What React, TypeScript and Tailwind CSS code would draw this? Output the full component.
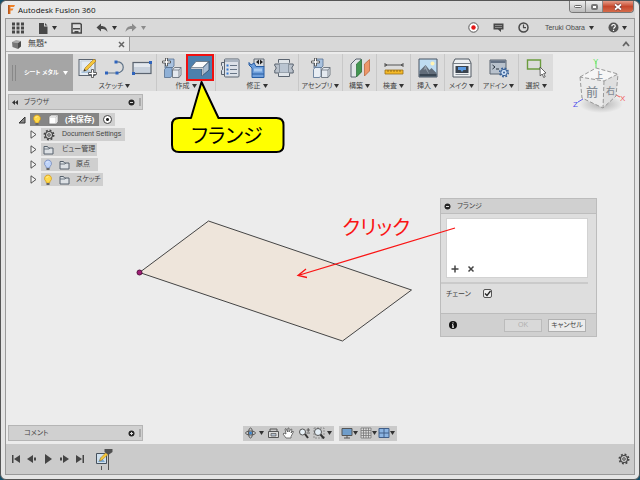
import type { ReactNode } from "react";

type IconProps = {
  children: ReactNode;
  box?: string;
  className?: string;
};

function Icon({ children, box = "0 0 20 20", className = "h-5 w-5" }: IconProps) {
  return (
    <svg viewBox={box} className={`shrink-0 ${className}`} fill="none" aria-hidden="true">
      {children}
    </svg>
  );
}

function Caret({ className = "text-[#333]" }: { className?: string }) {
  return (
    <Icon box="0 0 5 4" className={`h-1 w-[5px] ${className}`}>
      <path d="M0 0h5L2.5 4z" fill="currentColor" />
    </Icon>
  );
}

const line = "#5b6470";

const SketchIcon = () => (
  <Icon>
    <rect x="1" y="1.5" width="16" height="16" fill="#e4ebf2" stroke={line} />
    <path d="M3 15 8 9l6 6z" fill="#a9c4de" />
    <path d="M3 3h10v10H3z" stroke="#c4cfd9" />
    <path d="m6 13 1-3 9-9 2 2-9 9z" fill="#f5c63c" stroke="#a57315" strokeWidth=".6" />
    <path d="m5.500 13.500 1-2.500 1.500 1.500z" fill="#333" />
    <path d="M13.500 11.500h2v3h3v2h-3v3h-2v-3h-3v-2h3z" fill="#fff" stroke="#444" strokeWidth=".8" />
  </Icon>
);

const LineIcon = () => (
  <Icon>
    <path d="M1 15h11M11 4c10-1 9 11 1 11" stroke="#5f7388" strokeWidth="1.200" />
    <path d="M0 13.500h3v3H0zM9.500 2.500h3v3h-3zM10.500 13.500h3v3h-3z" fill="#2f64bd" />
  </Icon>
);

const RectIcon = () => (
  <Icon>
    <rect x="1" y="4.500" width="18" height="11" fill="#c8d1dc" stroke={line} strokeWidth="1.200" />
    <path d="M2 5.500h16V9H2z" fill="#e3e8ee" />
    <path d="M17 3h3v3h-3zM0 14h3v3H0z" fill="#2f64bd" />
  </Icon>
);

function BlockIcon({ assembly = false }: { assembly?: boolean }) {
  return (
    <Icon>
      <path d="M3 3.500 5 1h7v7l-2 2H3z" fill="#a9c2df" stroke="#55708f" strokeWidth=".8" />
      <path d="M2.500 11.500 4 9.500h6v8l-1.500 2h-6z" fill={assembly ? "#e8edf3" : "#8fb0d6"} stroke="#55708f" strokeWidth=".8" />
      <path d="M10.500 12 12.500 9.500H19v7.500l-2 2.500h-6.500z" fill="#e4e9ef" stroke={line} strokeWidth=".8" />
      <path d="M10.500 12H17v7.500M17 12l2-2.500" stroke={line} strokeWidth=".7" />
      <path d="M3.500 0h2v3h3v2h-3v3h-2V5h-3V3h3z" fill="#fff" stroke="#444" strokeWidth=".8" />
    </Icon>
  );
}

const FlangeIcon = () => (
  <Icon>
    <path d="M1 9.500 6 3.500h13l-6 6z" fill="#fbfbfb" stroke="#59636e" strokeWidth=".7" />
    <path d="m13 9.500 6-6v8.500L12 18v-7z" fill="#a9bdd4" stroke="#2d4a66" strokeWidth=".8" />
    <path d="M1 9.500V11h11v7l1-1V9.500z" fill="#e6ebf0" stroke="#59636e" strokeWidth=".4" />
  </Icon>
);

const TableIcon = () => (
  <Icon>
    <path d="M4 4.500H1.500v3l1 1v3l-1 1v4H4" fill="#d9dfe6" stroke={line} />
    <rect x="4.500" y="1" width="14.500" height="18" rx="1" fill="#dce1e8" stroke={line} />
    <path d="M5 1.500h13.500V4H5z" fill="#aab4c0" />
    <path d="M10 7.500h7M10 11.500h7M10 15.500h7" stroke="#667485" />
    <path d="M6.500 6.500h2v2h-2zM6.500 10.500h2v2h-2zM6.500 14.500h2v2h-2z" fill="#3478d0" />
  </Icon>
);

const UnfoldIcon = () => (
  <Icon>
    <path d="M7 1h10v8H7z" fill="#d9dce0" stroke="#636b74" />
    <path d="m9 4 3-2.500v5zm7 0-3-2.500v5z" fill="#222" />
    <path d="M2 4.500 4 7l3-2 2 3.500h8v11H5V10L2 7z" fill="#6f9fdb" stroke="#285da2" />
    <path d="M7 10.500h8v3H7z" fill="#a7c9ef" />
    <path d="M5 16h12" stroke="#285da2" />
  </Icon>
);

const PatternIcon = () => (
  <Icon>
    <path d="M5 6H.8v2L2 9v2L.8 12v3H5M15 6h4.200v2L18 9v2l1.200 1v3H15" fill="#b8c0ca" stroke={line} />
    <path d="M4.500 1.500h11v3l-1 1v9l1 1v3h-11v-3l1-1v-9l-1-1z" fill="#dfe4e9" stroke={line} />
    <path d="M5.500 5.500h9v9h-9z" fill="#bac5d2" />
    <path d="M5.500 5.500h9M5.500 14.500h9" stroke="#8b96a2" strokeWidth=".8" />
  </Icon>
);

const PlaneIcon = () => (
  <Icon>
    <path d="m1 6 5-5h5v13l-5 5H1z" fill="#e1e5e8" stroke={line} />
    <path d="m6.500 6 5-4.500V14l-5 5z" fill="#429650" stroke="#286f37" strokeWidth=".7" />
    <path d="m14.500 6 5-4.500V13l-5 5z" fill="#ed9769" stroke="#b45e31" strokeWidth=".7" />
  </Icon>
);

const MeasureIcon = () => (
  <Icon>
    <path d="M1 7h18M1 5v4M19 5v4" stroke="#444" strokeWidth=".9" />
    <path d="m1 7 2-1v2zm18 0-2-1v2z" fill="#444" />
    <path d="M1 12h18v4H1z" fill="#f4b928" stroke="#9b7016" strokeWidth=".8" />
    <path d="M4 12v2m3-2v2m3-2v2m3-2v2m3-2v2" stroke="#705212" strokeWidth=".7" />
  </Icon>
);

const PictureIcon = () => (
  <Icon>
    <path d="M1 1h18v18H1z" fill="#bedcf1" stroke="#485564" />
    <circle cx="14.500" cy="5.500" r="2" fill="#fff3b3" />
    <path d="m1.500 13 6-6 4 5 2-2 5 5v3.500h-17z" fill="#626d7a" />
    <path d="m7.500 7-2 5 2-1 4 6z" fill="#929eaa" />
    <path d="M1.500 16h17v2.500h-17z" fill="#394653" />
  </Icon>
);

const MakeIcon = () => (
  <Icon>
    <path d="M3 1h14l2 4v14H1V5z" fill="#edf0f2" stroke="#505862" />
    <path d="M1 5.500h18" stroke="#777f87" />
    <path d="M3.500 8h13v7h-13z" fill="#3a434e" />
    <path d="M6 9h8v3h-2.500L10 14l-1.500-2H6z" fill="#5b9be2" />
    <path d="M3.500 16.500h13" stroke="#8a929a" />
  </Icon>
);

const AddinIcon = () => (
  <Icon>
    <path d="M1 2h16v14H1z" fill="#b8c1cc" stroke={line} />
    <path d="M1.500 2.500h15V5h-15z" fill="#647184" />
    <path d="m3.500 7 2.500 2-2.500 2M7 11h3" stroke="#27313d" />
    <circle cx="15" cy="14.500" r="3.200" fill="#cddff4" stroke="#355f97" />
    <circle cx="15" cy="14.500" r="4.300" stroke="#355f97" strokeWidth="1.500" strokeDasharray="1.800 1.580" />
    <circle cx="15" cy="14.500" r="1" fill="#355f97" />
  </Icon>
);

const SelectIcon = () => (
  <Icon>
    <path d="M1.500 2h13v9h-13z" stroke="#6b9c3e" strokeWidth="1.400" />
    <path d="m14 9 .2 9 2-2 1.500 3.500 1.500-.8-1.500-3.200 2.300-.5z" fill="#fff" stroke="#444" strokeWidth=".8" />
  </Icon>
);

type ToolGroup = {
  label: string;
  width: string;
  icons: ReactNode[];
};

const groups: ToolGroup[] = [
  { label: "スケッチ", width: "w-[84px]", icons: [<SketchIcon />, <LineIcon />, <RectIcon />] },
  { label: "作成", width: "w-[59px]", icons: [<BlockIcon />, <FlangeIcon />] },
  { label: "修正", width: "w-[83px]", icons: [<TableIcon />, <UnfoldIcon />, <PatternIcon />] },
  { label: "アセンブリ", width: "w-11", icons: [<BlockIcon assembly />] },
  { label: "構築", width: "w-[34px]", icons: [<PlaneIcon />] },
  { label: "検査", width: "w-[34px]", icons: [<MeasureIcon />] },
  { label: "挿入", width: "w-[34px]", icons: [<PictureIcon />] },
  { label: "メイク", width: "w-[34px]", icons: [<MakeIcon />] },
  { label: "アドイン", width: "w-10", icons: [<AddinIcon />] },
  { label: "選択", width: "w-[34px]", icons: [<SelectIcon />] },
];

function Toolbar() {
  return (
    <div className="flex h-[37px] self-start bg-[#dcdcdc]">
      <button type="button" className="flex w-[65px] items-center gap-1 bg-[#a5a5a5] pl-1 text-[6px] font-bold whitespace-nowrap text-white">
        <span className="mr-1 h-4 w-1 border-x border-[#888]" />
        シート メタル
        <Caret className="text-white" />
      </button>
      {groups.map((group) => (
        <div key={group.label} className={`flex flex-col items-center border-r border-[#c8c8c8] last:border-r-0 ${group.width}`}>
          <div className={`flex h-[27px] items-center ${group.icons.length === 2 ? "gap-1 pl-1" : "gap-[7px]"}`}>
            {group.icons.map((icon, index) => (
              <button
                key={index}
                type="button"
                aria-label={`${group.label} ${index + 1}`}
                className={
                  group.label === "作成" && index === 1
                    ? "flex h-[27px] w-7 items-center justify-center border-2 border-[#f01010] bg-[#4d80ad]"
                    : ""
                }
              >
                {icon}
              </button>
            ))}
          </div>
          <button type="button" className="flex h-[10px] items-center gap-[2px] text-[7px] leading-[10px] whitespace-nowrap">
            {group.label}
            <Caret />
          </button>
        </div>
      ))}
    </div>
  );
}

function Bulb({ on = true }: { on?: boolean }) {
  return (
    <Icon box="0 0 10 12" className="h-3 w-[10px]">
      <path d="M5 1a3.500 3.500 0 0 0-2.200 6.200L3.500 9h3l.7-1.800A3.500 3.500 0 0 0 5 1z" fill={on ? "#ffda4a" : "#bfd4fa"} stroke={on ? "#d49d20" : "#7389bd"} strokeWidth=".8" />
      <path d="M3.500 9h3v2h-3z" fill="#666" />
      <path d="M4 3.500 5 2.500" stroke="#fff" />
    </Icon>
  );
}

const Folder = () => (
  <Icon box="0 0 11 10" className="h-[10px] w-[11px]">
    <path d="M1 9V1.500h3.500l1 1.500H10v6z" fill="#dde1e5" stroke="#56616c" />
    <path d="M1 4h5l1-1" stroke="#56616c" strokeWidth=".8" />
  </Icon>
);

function Gear({ className = "h-3 w-3" }: { className?: string }) {
  return (
    <Icon box="0 0 12 12" className={className}>
      <circle cx="6" cy="6" r="3.500" stroke="#454545" strokeWidth="1.200" />
      <circle cx="6" cy="6" r="4.700" stroke="#454545" strokeWidth="1.600" strokeDasharray="1.850 1.840" />
      <circle cx="6" cy="6" r="1.300" stroke="#454545" strokeWidth=".9" />
    </Icon>
  );
}

const RoundMark = ({ plus = false }: { plus?: boolean }) => (
  <Icon box="0 0 7 7" className="h-[7px] w-[7px]">
    <circle cx="3.500" cy="3.500" r="3" fill="#262626" />
    <path d={plus ? "M2 3.500h3M3.500 2v3" : "M2 3.500h3"} stroke="#ddd" />
  </Icon>
);

const treeRows = [
  { label: "Document Settings", icon: <Gear />, width: "w-[84px]", gap: "gap-[7px]" },
  { label: "ビュー管理", icon: <Folder />, width: "w-14", gap: "gap-2" },
  { label: "原点", icon: <><Bulb on={false} /><Folder /></>, width: "w-[57px]", gap: "gap-[6px]" },
  { label: "スケッチ", icon: <><Bulb /><Folder /></>, width: "w-[62px]", gap: "gap-[6px]" },
];

function Browser() {
  return (
    <section className="w-[135px]" aria-label="ブラウザ">
      <header className="flex h-4 items-center border border-[#b5b5b5] bg-[#d0d0d0] pl-[3px]">
        <Icon box="0 0 6 5" className="h-[5px] w-[6px]">
          <path d="M3 0v5L0 2.500zM6 0v5L3 2.500z" fill="#333" />
        </Icon>
        <h2 className="ml-[6px] flex-1 text-[7px]">ブラウザ</h2>
        <RoundMark />
        <span className="ml-1 mr-px h-2 w-[2px] border-x border-[#aaa]" />
      </header>
      <ul className="mt-[3px] flex flex-col gap-[2px] text-[7px]">
        <li className="flex h-[13px] items-center pl-[10px]">
          <Icon box="0 0 8 8" className="mr-1 h-2 w-2">
            <path d="M7 1v6H1z" fill="#888" stroke="#333" />
          </Icon>
          <div className="flex h-[13px] w-[69px] items-center gap-[6px] bg-[#858585] pl-[2px] text-[8px] font-bold text-white">
            <Bulb />
            <Icon box="0 0 11 11" className="h-[11px] w-[11px]">
              <path d="m1 3 2-2h7v7l-2 2H1z" fill="#fff" stroke="#777" strokeWidth=".8" />
              <path d="M1 3h7v7M8 3l2-2" stroke="#bbb" strokeWidth=".8" />
            </Icon>
            <span className="whitespace-nowrap">(未保存)</span>
          </div>
          <label className="flex h-[13px] w-4 items-center justify-center bg-[#d0d0d0]">
            <input type="radio" name="active" defaultChecked aria-label="未保存" className="h-[9px] w-[9px] appearance-none rounded-full border border-[#444] bg-[radial-gradient(circle,#222_0_1px,#fff_2px)]" />
          </label>
        </li>
        {treeRows.map((row) => (
          <li key={row.label} className="flex h-[13px] items-center pl-[22px]">
            <Icon box="0 0 7 9" className="mr-1 h-[9px] w-[7px]">
              <path d="m1 .8 5 3.700-5 3.700z" fill="#f6f6f6" stroke="#444" strokeWidth=".9" />
            </Icon>
            <div className={`flex h-[13px] items-center bg-[#cfcfcf] pl-[2px] ${row.gap} ${row.width}`}>
              {row.icon}
              <span className="whitespace-nowrap">{row.label}</span>
            </div>
          </li>
        ))}
      </ul>
    </section>
  );
}

function ViewCube() {
  return (
    <svg viewBox="0 0 60 64" className="absolute top-0 right-2 h-16 w-[60px]" role="img" aria-label="ビューキューブ">
      <defs>
        <radialGradient id="shade">
          <stop stopColor="#888" stopOpacity=".6" />
          <stop offset="1" stopColor="#888" stopOpacity="0" />
        </radialGradient>
      </defs>
      <ellipse cx="35" cy="52" rx="22" ry="9" fill="url(#shade)" />
      <path d="M30 16V9" stroke="#63e663" />
      <path d="m50 43 4 2" stroke="#f26060" />
      <path d="m17 47-5 3" stroke="#6060f0" />
      <path d="m14 25 16-9 22 6-14 7z" fill="#f6f6f6" />
      <path d="m14 25 24 4-1 27-21-10z" fill="#ebebeb" />
      <path d="m38 29 14-7-2 22-13 12z" fill="#dfdfdf" />
      <path d="m14 25 16-9 22 6-14 7zM14 25l2 21 21 10 13-12 2-22M38 29l-1 27" fill="none" stroke="#999" strokeDasharray="4 2" />
      <g fill="#858d96" fontSize="12" fontWeight="500" fontFamily="Noto Sans CJK JP, sans-serif">
        <text x="20" y="45">前</text>
        <text x="40" y="42" fontSize="9">右</text>
        <text x="29" y="26" fontSize="8">上</text>
      </g>
      <g fontSize="8" fontFamily="Liberation Sans, sans-serif">
        <text x="27" y="12" fill="#63e663">Y</text>
        <text x="54" y="49" fill="#f26060">X</text>
        <text x="7" y="55" fill="#4d4dea">Z</text>
      </g>
    </svg>
  );
}

function FlangeDialog() {
  return (
    <section aria-label="フランジ" className="absolute top-[146px] right-[37px] w-[157px] border border-[#bcbcbc] bg-[#dedede] text-[7px]">
      <header className="flex h-[15px] items-center gap-[6px] border-b border-[#bdbdbd] bg-[#d0d0d0] pl-[3px]">
        <RoundMark />
        <h2>フランジ</h2>
      </header>
      <div className="mt-1 mr-2 ml-[5px] flex h-[60px] items-end gap-2 border border-[#d2d2d2] bg-white p-1">
        <button type="button" aria-label="追加">
          <Icon box="0 0 8 8" className="h-2 w-2">
            <path d="M4 .5v7M.5 4h7" stroke="#444" strokeWidth="1.500" />
          </Icon>
        </button>
        <button type="button" aria-label="削除">
          <Icon box="0 0 8 8" className="h-2 w-2">
            <path d="m1.500 1.500 5 5m0-5-5 5" stroke="#444" strokeWidth="1.500" />
          </Icon>
        </button>
      </div>
      <hr className="mt-1 mr-2 border-t-2 border-[#cacaca]" />
      <div className="flex h-[29px] items-start pt-[5px] pl-[5px]">
        <label htmlFor="chain" className="w-[37px] leading-[10px]">チェーン</label>
        <span className="relative flex">
          <input id="chain" type="checkbox" defaultChecked className="h-[9px] w-[9px] appearance-none rounded-xs border border-[#555] bg-[#eee]" />
          <Icon box="0 0 9 9" className="pointer-events-none absolute inset-0 h-[9px] w-[9px]">
            <path d="m2 4.500 2 2L7.500 2" stroke="#222" strokeWidth="1.300" />
          </Icon>
        </span>
      </div>
      <footer className="flex h-[23px] items-center gap-[6px] border-t border-[#bcbcbc] bg-[#d0d0d0] pr-[10px] pl-2">
        <Icon box="0 0 8 8" className="mr-auto h-2 w-2">
          <circle cx="4" cy="4" r="4" fill="#111" />
          <path d="M4 1.300v1.200M3 3.700h1v2.500M3 6.200h2" stroke="#fff" />
        </Icon>
        <button type="button" disabled className="h-[13px] w-[38px] border border-[#bbb] bg-[#d9d9d9] leading-[10px] text-[#b0b0b0]">OK</button>
        <button type="button" className="h-[13px] w-[38px] border border-[#b0b0b0] bg-[#ececec] leading-[10px] whitespace-nowrap">キャンセル</button>
      </footer>
    </section>
  );
}

function NavBar() {
  return (
    <div className="flex gap-[5px]">
      <div className="flex h-[15px] w-[91px] items-center justify-between bg-[#cacaca] px-[2px]">
        <button type="button" aria-label="オービット" className="flex items-center gap-[3px]">
          <Icon box="0 0 11 12" className="h-3 w-[11px]">
            <ellipse cx="5.500" cy="6" rx="5" ry="2" stroke="#555" />
            <ellipse cx="5.500" cy="6" rx="2" ry="5" stroke="#555" />
            <circle cx="5.500" cy="6" r="1.500" fill="#3982cb" />
          </Icon>
          <Caret />
        </button>
        <button type="button" aria-label="ビュー正面">
          <Icon box="0 0 11 12" className="h-3 w-[11px]">
            <path d="M2 4V2h7v2" stroke="#555" />
            <path d="M.5 4.500h10v6H.500z" fill="#ddd" stroke="#555" />
            <path d="M3 6.500h5v2.500H3z" fill="#b5c1cf" stroke="#555" strokeWidth=".7" />
          </Icon>
        </button>
        <button type="button" aria-label="画面移動">
          <Icon box="0 0 12 12" className="h-3 w-3">
            <path d="M4 11 1 7l1-1 2 1-1-5 1-.5L5.500 5 6 1h1v4l2-3 1 .5L9 6l2-2 .5.7L9 9.500V11z" fill="#fff" stroke="#555" strokeWidth=".8" />
          </Icon>
        </button>
        <button type="button" aria-label="ズーム">
          <Icon box="0 0 12 12" className="h-3 w-3">
            <circle cx="4.500" cy="5" r="3" fill="#e8f1f7" stroke="#555" />
            <path d="m7 7 3 4" stroke="#333" strokeWidth="2" />
            <path d="M8.500 3H12M10.200 1v4M8.500 6H12" stroke="#444" strokeWidth=".8" />
          </Icon>
        </button>
        <button type="button" aria-label="フィット" className="flex items-center gap-[2px]">
          <Icon box="0 0 12 12" className="h-3 w-3">
            <path d="M1 1h10v10H1z" stroke="#777" strokeWidth=".7" strokeDasharray="2 1" />
            <circle cx="5" cy="5" r="3.500" fill="#e3edf5" stroke="#555" />
            <path d="m7.500 7.500 3.500 4" stroke="#333" strokeWidth="2" />
          </Icon>
          <Caret />
        </button>
      </div>
      <div className="flex h-[15px] w-[58px] items-center justify-between bg-[#cacaca] px-[2px]">
        <button type="button" aria-label="表示設定" className="flex items-center">
          <Icon box="0 0 12 12" className="h-3 w-3">
            <path d="M1 1.500h10v7H1z" fill="#6f9dca" stroke="#555" />
            <path d="M6 9v2M3 11h6" stroke="#555" />
          </Icon>
          <Caret />
        </button>
        <button type="button" aria-label="グリッド" className="flex items-center">
          <Icon box="0 0 12 12" className="h-3 w-3">
            <path d="M1 1h10v10H1zM3.500 1v10M6 1v10M8.500 1v10M1 3.500h10M1 6h10M1 8.500h10" fill="#ddd" stroke="#777" strokeWidth=".8" />
          </Icon>
          <Caret />
        </button>
        <button type="button" aria-label="ビューポート" className="flex items-center">
          <Icon box="0 0 12 12" className="h-3 w-3">
            <path d="M1 1.500h10v9H1z" fill="#8bb4e2" stroke="#405e88" />
            <path d="M6 1.500v9M1 6h10" stroke="#405e88" />
          </Icon>
          <Caret />
        </button>
      </div>
    </div>
  );
}

function QuickAccess() {
  return (
    <div className="flex h-[18px] items-center border-b border-[#9e9e9e] bg-[#d9d9d9] pr-[7px] pl-[6px] text-[#484848]">
      <button type="button" aria-label="データ パネル">
        <Icon box="0 0 12 12" className="h-3 w-3">
          <path d="M0 .5h3v3H0zM4.500 .5h3v3h-3zM9 .5h3v3H9zM0 4.500h3v3H0zM4.500 4.500h3v3h-3zM9 4.500h3v3H9zM0 8.500h3v3H0zM4.500 8.500h3v3h-3zM9 8.500h3v3H9z" fill="currentColor" />
        </Icon>
      </button>
      <button type="button" aria-label="ファイル" className="ml-[14px] flex items-center gap-1">
        <Icon box="0 0 10 12" className="h-3 w-[10px]">
          <path d="M1 1h5v3.500h3.500V12H1zM7 1l2.500 2.500H7z" fill="currentColor" />
        </Icon>
        <Caret />
      </button>
      <button type="button" aria-label="保存" className="ml-[14px]">
        <Icon box="0 0 11 12" className="h-3 w-[11px]">
          <path d="M1 1.500h8l1.300 1V11H1z" fill="#ddd" stroke="currentColor" strokeWidth="1.500" />
          <path d="M2 6h7v1.500H2zM3.500 9h4v2h-4z" fill="currentColor" />
        </Icon>
      </button>
      <button type="button" aria-label="元に戻す" className="ml-[14px] flex items-center gap-1">
        <Icon box="0 0 12 10" className="h-[10px] w-3">
          <path d="M5 .5v2.500c4 0 6 2 6.500 6C10 6.500 8 6 5 6v2.500L.5 4.500z" fill="currentColor" />
        </Icon>
        <Caret />
      </button>
      <button type="button" aria-label="やり直し" className="ml-2 flex items-center gap-1 text-[#8b8b8b]">
        <Icon box="0 0 12 10" className="h-[10px] w-3">
          <path d="M7 .5v2.500C3 3 1 5 .5 9 2 6.500 4 6 7 6v2.500l4.500-4z" fill="currentColor" />
        </Icon>
        <Caret className="text-[#8b8b8b]" />
      </button>
      <button type="button" aria-label="記録" className="ml-auto">
        <Icon box="0 0 11 11" className="h-[11px] w-[11px]">
          <circle cx="5.500" cy="5.500" r="4.700" fill="#fff" stroke="#555" />
          <circle cx="5.500" cy="5.500" r="2.200" fill="#e41717" />
        </Icon>
      </button>
      <button type="button" aria-label="コメント" className="ml-[14px]">
        <Icon box="0 0 11 11" className="h-[11px] w-[11px]">
          <path d="M.5 1.500h10v6H8V10L5 7.500H.500z" fill="currentColor" />
          <path d="M2 3.500h7M2 5.500h7" stroke="#aaa" strokeWidth=".7" />
        </Icon>
      </button>
      <button type="button" aria-label="ジョブ状況" className="ml-[14px]">
        <Icon box="0 0 11 11" className="h-[11px] w-[11px]">
          <circle cx="5.500" cy="5.500" r="4.500" stroke="currentColor" strokeWidth="1.500" />
          <path d="M5.500 2.500v3.200H8" stroke="currentColor" strokeWidth="1.200" />
        </Icon>
      </button>
      <button type="button" className="ml-4 flex items-center gap-1 font-['Liberation_Sans'] text-[7px] leading-3">
        Teruki Obara
        <Caret />
      </button>
      <button type="button" aria-label="ヘルプ" className="ml-[14px] flex items-center gap-[3px]">
        <Icon box="0 0 11 11" className="h-[11px] w-[11px]">
          <circle cx="5.500" cy="5.500" r="5" fill="#555" />
          <path d="M3.800 4.200c0-2.300 3.500-2.200 3.500 0 0 1.200-1.700 1.200-1.700 2.500M5.500 7.800V9" stroke="#fff" strokeWidth="1.200" />
        </Icon>
        <Caret />
      </button>
    </div>
  );
}

const playback = [
  { label: "最初へ", path: "M1 1h1.500v8H1zM9 1v8L3 5z" },
  { label: "前へ", path: "M6 1v8L0 5zM7 3.500h2v3H7z" },
  { label: "再生", path: "M2 0v10l7-5z" },
  { label: "次へ", path: "M4 1v8l6-4zM1 3.500h2v3H1z" },
  { label: "最後へ", path: "M1 1v8l6-4zM7.500 1H9v8H7.500z" },
];

function Timeline() {
  return (
    <footer className="flex h-[30px] items-center gap-[6px] bg-[#cbcbcb] pr-1 pl-[5px]">
      {playback.map((item) => (
        <button key={item.label} type="button" aria-label={item.label}>
          <Icon box="0 0 10 10" className="h-[10px] w-[10px]">
            <path d={item.path} fill="#444" />
          </Icon>
        </button>
      ))}
      <button type="button" aria-label="スケッチ1" className="ml-1">
        <Icon box="0 0 18 22" className="h-[22px] w-[18px]">
          <path d="M1.500 5.500h10v10h-10z" fill="#cfe0ee" stroke="#46515c" />
          <path d="m3 14 3-5 4 5z" fill="#7ba5cd" />
          <path d="m4.500 13 1-3L11 4.500l2 2L7 12z" fill="#f4c63b" stroke="#9a701e" strokeWidth=".5" />
          <path d="M6.500 18v4" stroke="#555" />
          <path d="M9.500 1h8v3L14 6.500V22h-1V6.500L9.500 4z" fill="#505050" />
        </Icon>
      </button>
      <button type="button" aria-label="設定" className="ml-auto">
        <Gear className="h-3 w-3" />
      </button>
    </footer>
  );
}

export default function App() {
  return (
    <div className="h-screen bg-[#15506a] font-['Liberation_Sans','Noto_Sans_CJK_JP',sans-serif] text-[#444] [font-feature-settings:'palt']">
      <div className="relative flex h-full flex-col overflow-hidden rounded-md border border-[#555] bg-[#e5e5e5] px-1 pb-1">
        <header className="flex h-[17px] shrink-0 items-center bg-linear-to-r from-[#e9e9e9] to-[#d8d8d8] pl-[2px]">
          <Icon box="0 0 8 9" className="h-[9px] w-2">
            <path d="M1 0h7L7 2H3.500v1.500h3l-1 2h-2V9H1z" fill="#ee8127" />
            <path d="M1 0h1.500v9H1z" fill="#b8571b" />
          </Icon>
          <h1 className="ml-[3px] font-['Open_Sans','Noto_Sans',sans-serif] text-[8px] text-[#111]">Autodesk Fusion 360</h1>
          <div className="mr-px ml-auto flex h-3 self-start overflow-hidden rounded-b-sm border border-t-0 border-[#777]">
            <button type="button" aria-label="最小化" className="flex w-4 items-center justify-center border-r border-[#888] bg-linear-to-b from-[#eee] to-[#bbb]">
              <span className="h-[3px] w-2 rounded-xs border border-[#666] bg-white" />
            </button>
            <button type="button" aria-label="最大化" className="flex w-[17px] items-center justify-center border-r border-[#888] bg-linear-to-b from-[#eee] to-[#bbb]">
              <span className="h-[6px] w-[7px] rounded-xs border-2 border-[#777] bg-white" />
            </button>
            <button type="button" aria-label="閉じる" className="flex w-[30px] items-center justify-center bg-linear-to-b from-[#e59b87] via-[#c6472c] to-[#d46b4a]">
              <Icon box="0 0 8 8" className="h-2 w-2">
                <path d="m1 1.500 6 5m0-5-6 5" stroke="#633" strokeWidth="3" />
                <path d="m1 1.500 6 5m0-5-6 5" stroke="#fff" strokeWidth="1.700" />
              </Icon>
            </button>
          </div>
        </header>

        <div className="flex min-h-0 flex-1 flex-col border border-[#999]">
          <QuickAccess />
          <div className="flex h-[15px] items-center border-b border-[#b0b0b0] bg-[#d8d8d8] pr-1">
            <div className="flex h-full w-[124px] items-center border-r border-[#999] bg-[#ebebeb] pr-1 pl-[5px]">
              <Icon box="0 0 11 11" className="h-[11px] w-[11px]">
                <path d="M1 3 5 1l5 1-3 2z" fill="#aaa" />
                <path d="m1 3 6 1v6L1.500 8z" fill="#777" />
                <path d="m7 4 3-2v5.500L7 10z" fill="#4c4c4c" />
              </Icon>
              <span className="ml-[6px] text-[8px]">無題*</span>
              <button type="button" aria-label="タブを閉じる" className="ml-auto">
                <Icon box="0 0 7 7" className="h-[7px] w-[7px]">
                  <path d="m1 1 5 5m0-5L1 6" stroke="#666" strokeWidth="1.500" />
                </Icon>
              </button>
            </div>
            <button type="button" aria-label="折りたたむ" className="ml-auto">
              <Icon box="0 0 8 6" className="h-[6px] w-2">
                <path d="m1 5 3-3.500L7 5" stroke="#666" strokeWidth="1.800" />
              </Icon>
            </button>
          </div>

          <main className="relative flex min-h-0 flex-1 flex-col gap-[3px] bg-[#ececec] px-[2px] pt-[2px] pb-[3px]">
            <Toolbar />
            <Browser />
            <ViewCube />
            <FlangeDialog />
            <div className="mt-auto grid grid-cols-[1fr_auto_1fr] items-center">
              <section className="flex h-4 w-[135px] items-center border border-[#b5b5b5] bg-[#d0d0d0] pl-[15px]">
                <h2 className="flex-1 text-[7px]">コメント</h2>
                <RoundMark plus />
                <span className="ml-1 mr-px h-2 w-[2px] border-x border-[#aaa]" />
              </section>
              <NavBar />
            </div>

            <svg viewBox="6 52 628 392" preserveAspectRatio="xMinYMin meet" className="pointer-events-none absolute inset-0 h-full w-full" fill="none" aria-hidden="true">
              <path d="m139.500 272.500 69-51.500L411.500 290l-69 51z" fill="#eee5db" stroke="#444" />
              <circle cx="139.500" cy="272.500" r="2.500" fill="#a01f76" stroke="#55113f" />
              <path d="M455 228 298 275.500M306 269l-8 6.500 9 2" stroke="#fa1414" strokeWidth="1.300" />
              <path d="M179 118h12l10.500-36 17 36h58q7 0 7 7v20q0 7-7 7H179q-7 0-7-7v-20q0-7 7-7z" fill="#ff0" stroke="#000" strokeWidth="2" strokeLinejoin="round" />
            </svg>
            <p className="pointer-events-none absolute top-[70px] left-[166px] w-[110px] text-center text-[20px] leading-[28px] text-black">フランジ</p>
            <p className="pointer-events-none absolute top-[162px] left-[336px] text-[20px] leading-[28px] whitespace-nowrap text-[#fa1414]">クリック</p>
          </main>

          <Timeline />
        </div>
      </div>
    </div>
  );
}
